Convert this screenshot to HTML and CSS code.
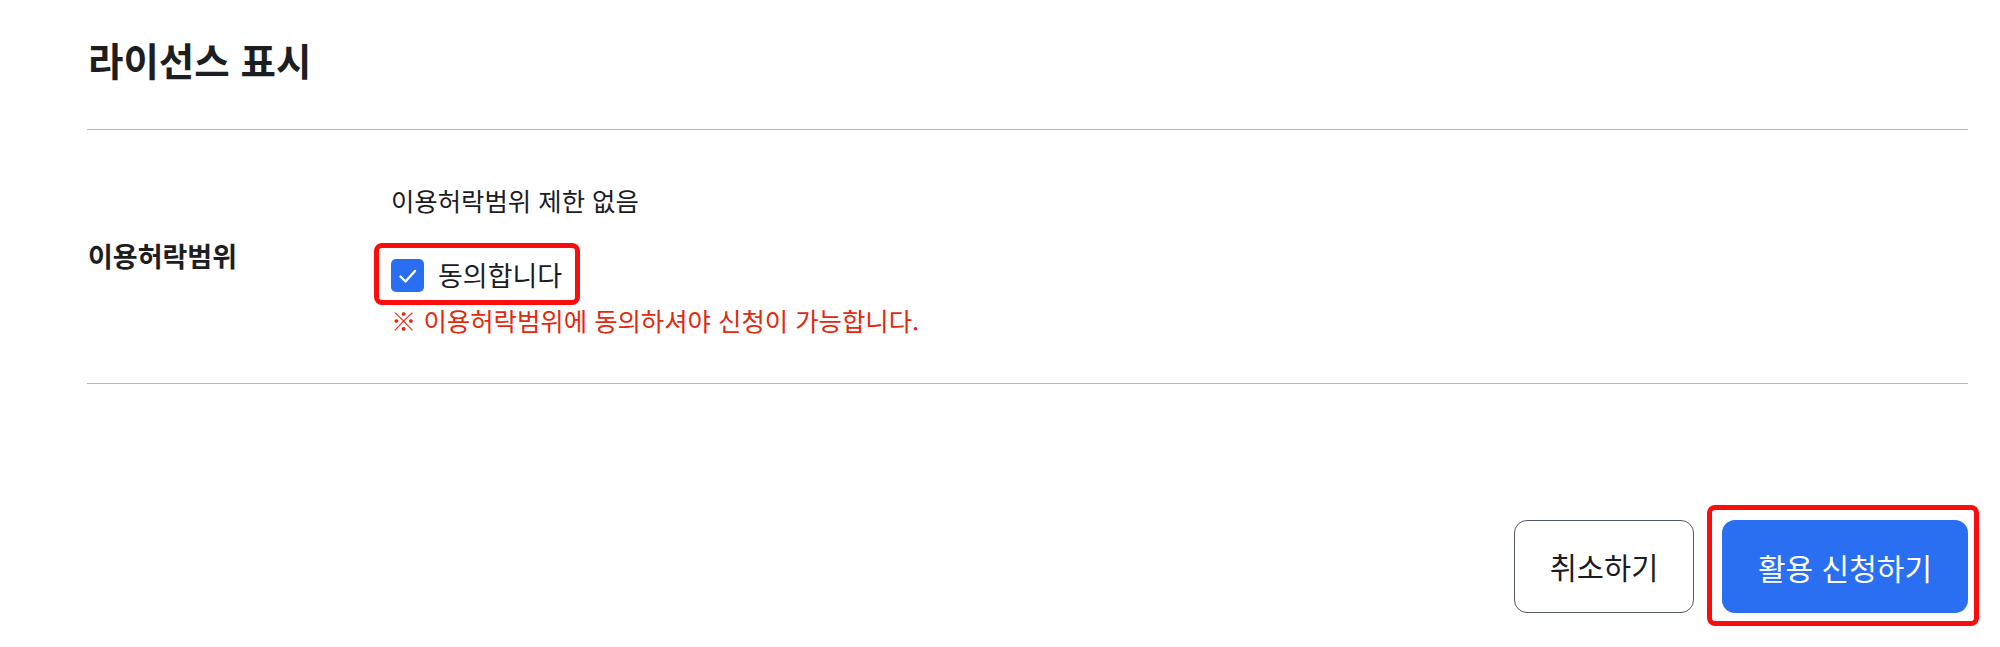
FILE: index.html
```html
<!DOCTYPE html>
<html lang="ko">
<head>
<meta charset="utf-8">
<title>라이선스 표시</title>
<link rel="stylesheet" href="styles.css">
</head>
<body>
<main class="page">
  <header class="head">
    <h1 class="title">라이선스 표시</h1>
  </header>
  <section class="row">
    <div class="row-label">이용허락범위</div>
    <div class="row-body">
      <p class="scope">이용허락범위 제한 없음</p>
      <label class="agree">
        <span class="checkbox">
          <svg viewBox="0 0 33 33" width="33" height="33" aria-hidden="true">
            <path d="M9.5 17.5 L14.5 22.5 L24 12" fill="none" stroke="#fff" stroke-width="2.4" stroke-linecap="round" stroke-linejoin="round"/>
          </svg>
        </span>
        <span class="agree-text">동의합니다</span>
      </label>
      <p class="notice">※ 이용허락범위에 동의하셔야 신청이 가능합니다.</p>
    </div>
  </section>
  <div class="actions">
    <button class="btn btn-cancel" type="button">취소하기</button>
    <div class="highlight">
      <button class="btn btn-apply" type="button">활용 신청하기</button>
    </div>
  </div>
</main>
</body>
</html>
```

FILE: styles.css
```css
* { box-sizing: border-box; }

html, body {
  margin: 0;
  padding: 0;
  background: #ffffff;
}

body {
  min-height: 647px;
  font-family: "Noto Sans CJK KR", "Noto Sans", sans-serif;
  color: #1b1c1f;
}

.page {
  margin: 0 32px 0 87px;
  padding-bottom: 34px;
}

.head {
  padding: 34px 0 45px 1px;
  border-bottom: 1px solid #b5bbc6;
}

.title {
  margin: 0;
  font-size: 38.5px;
  font-weight: 700;
  line-height: 50px;
  color: #1d1e22;
}

.row {
  display: flex;
  align-items: center;
  padding: 53px 0 46px 0;
  border-bottom: 1px solid #b5bbc6;
}

.row-label {
  width: 304px;
  flex: none;
  padding: 0 0 8px 1px;
  font-size: 27px;
  font-weight: 700;
  line-height: 34px;
  color: #1d1e22;
}

.row-body {
  display: flex;
  flex-direction: column;
  align-items: flex-start;
}

.scope {
  margin: 0;
  font-size: 25.4px;
  line-height: 34px;
  color: #1b1c1f;
}

.agree {
  position: relative;
  display: flex;
  align-items: center;
  gap: 14px;
  margin-top: 41px;
  height: 34px;
  cursor: pointer;
}

.agree::after {
  content: "";
  position: absolute;
  top: -15px;
  right: -18px;
  bottom: -13px;
  left: -17px;
  border: 5px solid #fb0d0d;
  border-radius: 8px;
  pointer-events: none;
}

.checkbox {
  width: 33px;
  height: 33px;
  border-radius: 5px;
  background: #2a6ff2;
  display: flex;
}

.agree-text {
  font-size: 27px;
  line-height: 34px;
  color: #1b1c1f;
}

.notice {
  margin: 11px 0 0 0;
  font-size: 25.4px;
  line-height: 34px;
  color: #e2290f;
}

.actions {
  display: flex;
  justify-content: flex-end;
  align-items: flex-start;
  gap: 28px;
  margin-top: 136px;
}

.btn {
  display: block;
  height: 93px;
  border-radius: 13px;
  font-family: "Noto Sans CJK KR", "Noto Sans", sans-serif;
  font-size: 30px;
  line-height: 1;
  cursor: pointer;
}

.btn-cancel {
  width: 180px;
  background: #ffffff;
  border: 1.5px solid #515865;
  color: #1b1c1f;
  font-size: 29.5px;
}

.highlight {
  margin: -15px -11px -13px -15px;
  padding: 10px 6px 8px 10px;
  border: 5px solid #fb0d0d;
  border-radius: 8px;
}

.btn-apply {
  width: 246px;
  background: #2a6ff2;
  border: none;
  color: #ffffff;
}
```
